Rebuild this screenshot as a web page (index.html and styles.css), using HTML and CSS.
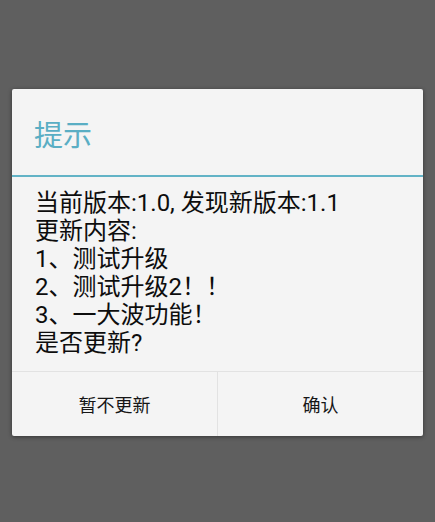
FILE: index.html
```html
<!DOCTYPE html>
<html lang="zh-CN">
<head>
<meta charset="utf-8">
<title>提示</title>
<link rel="stylesheet" href="styles.css">
</head>
<body>
<div class="dialog">
  <div class="dialog-title">提示</div>
  <div class="dialog-rule"></div>
  <div class="dialog-body">
    <p>当前版本:1.0, 发现新版本:1.1</p>
    <p>更新内容:</p>
    <p>1、测试升级</p>
    <p>2、测试升级2！！</p>
    <p>3、一大波功能！</p>
    <p>是否更新?</p>
  </div>
  <div class="dialog-actions">
    <button class="action">暂不更新</button>
    <button class="action">确认</button>
  </div>
</div>
</body>
</html>
```

FILE: styles.css
```css
html, body {
  margin: 0;
  padding: 0;
  height: 100%;
}

body {
  background: #5f5f5f;
  font-family: Roboto, "Noto Sans CJK SC", sans-serif;
  padding-top: 89px;
  box-sizing: border-box;
}

.dialog {
  margin-left: 12px;
  width: 411px;
  background: #f4f4f4;
  box-shadow: 0 1px 4px rgba(0, 0, 0, 0.45);
  border-radius: 2px;
}

.dialog-title {
  height: 86px;
  box-sizing: border-box;
  padding-left: 22px;
  display: flex;
  align-items: center;
  font-size: 29px;
  color: #5aaec4;
  padding-top: 2px;
}

.dialog-rule {
  height: 2px;
  background: #62b3c6;
}

.dialog-body {
  padding: 12px 22px 14px 23px;
  color: #0d0d0d;
  font-size: 24px;
  line-height: 28px;
}

.dialog-body p {
  margin: 0;
}

.dialog-actions {
  display: grid;
  grid-template-columns: 205px 1fr;
  border-top: 1px solid #e2e2e2;
  height: 64px;
}

.action {
  appearance: none;
  border: 0;
  background: transparent;
  font-family: inherit;
  font-size: 18px;
  color: #161616;
  padding: 0;
  margin: 0;
}

.action + .action {
  border-left: 1px solid #e2e2e2;
}
```
